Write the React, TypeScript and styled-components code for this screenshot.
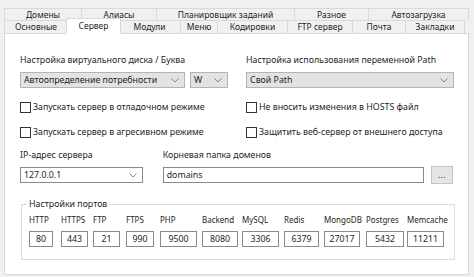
import React from "react";
import styled, { createGlobalStyle } from "styled-components";

const GlobalStyle = createGlobalStyle`
  body {
    margin: 0;
    background: #f0f0f0;
    font-family: "Noto Sans", "Open Sans", sans-serif;
    font-size: 8.8px;
    color: #1e1e1e;
  }
`;

const Window = styled.div`
  width: 474px;
  height: 277px;
  box-sizing: border-box;
  padding: 8px 5px 0 4px;
`;

const TabRow = styled.div`
  display: flex;
  height: 12px;
`;

const Tab = styled.div<{ $w: number; $active?: boolean }>`
  box-sizing: border-box;
  width: ${(p) => p.$w}px;
  height: ${(p) => (p.$active ? 16 : 13)}px;
  margin: ${(p) => (p.$active ? "-2px -2px 0" : "0")};
  padding-top: ${(p) => (p.$active ? 0 : 1)}px;
  border: 1px solid #d9d9d9;
  border-bottom: none;
  border-left-width: ${(p) => (p.$active ? 1 : 0)}px;
  &:first-child {
    border-left-width: 1px;
  }
  background: ${(p) => (p.$active ? "#fff" : "#f0f0f0")};
  position: ${(p) => (p.$active ? "relative" : "static")};
  z-index: ${(p) => (p.$active ? 2 : 0)};
  display: flex;
  align-items: center;
  justify-content: center;
  font-size: 8.5px;
  line-height: 1;
  white-space: nowrap;
`;

const Panel = styled.div`
  box-sizing: border-box;
  height: 242px;
  margin-top: 1px;
  background: #fff;
  border: 1px solid #d9d9d9;
  padding: 19px 15px 0 15px;
  position: relative;
  z-index: 1;
`;

const Columns = styled.div`
  display: grid;
  grid-template-columns: 208px 208px;
  column-gap: 18px;
`;

const Column = styled.div`
  display: flex;
  flex-direction: column;
`;

const Label = styled.div`
  height: 14px;
  line-height: 14px;
  white-space: nowrap;
`;

const SelectRow = styled.div`
  display: flex;
  gap: 5px;
  margin-top: 5px;
`;

const Select = styled.div<{ $w?: number; $white?: boolean }>`
  box-sizing: border-box;
  width: ${(p) => (p.$w ? `${p.$w}px` : "100%")};
  height: 16px;
  background: ${(p) => (p.$white ? "#fff" : "#e3e3e3")};
  border: 1px solid ${(p) => (p.$white ? "#8a8a8a" : "#b4b4b4")};
  display: flex;
  align-items: center;
  justify-content: space-between;
  padding: 0 5px 0 3px;
  white-space: nowrap;
`;

const Chevron = () => (
  <svg width="8" height="5" viewBox="0 0 8 5">
    <path d="M0.5 0.5 L4 4 L7.5 0.5" fill="none" stroke="#7a7a7a" strokeWidth="0.9" />
  </svg>
);

const CheckRow = styled.label`
  display: flex;
  align-items: center;
  gap: 2px;
  height: 12px;
  margin-top: 13px;
  white-space: nowrap;
`;

const Box = styled.span`
  box-sizing: border-box;
  width: 11px;
  height: 11px;
  border: 1px solid #333;
  background: #fff;
  flex-shrink: 0;
`;

const Fields = styled.div`
  display: flex;
  gap: 20px;
  margin-top: 10px;
`;

const Field = styled.div<{ $w: number }>`
  width: ${(p) => p.$w}px;
  display: flex;
  flex-direction: column;
`;

const FieldRow = styled.div`
  display: flex;
  gap: 7px;
  margin-top: 5px;
`;

const TextInput = styled.div`
  box-sizing: border-box;
  flex: 1;
  height: 16px;
  border: 1px solid #8a8a8a;
  background: #fff;
  display: flex;
  align-items: center;
  padding: 0 3px;
`;

const BrowseButton = styled.div`
  box-sizing: border-box;
  width: 22px;
  height: 18px;
  margin-top: -1px;
  border: 1px solid #c4c4c4;
  background: #e5e5e5;
  display: flex;
  align-items: center;
  justify-content: center;
  letter-spacing: 0.5px;
`;

const Group = styled.fieldset`
  margin: 14px 0 0 1px;
  width: 434px;
  box-sizing: border-box;
  border: 1px solid #dcdcdc;
  padding: 0 0 12px 7px;
`;

const Legend = styled.legend`
  padding: 0 2px;
  margin-left: -2px;
  line-height: 12px;
`;

const Ports = styled.div`
  display: flex;
`;

const PortCol = styled.div<{ $w: number }>`
  width: ${(p) => p.$w}px;
  display: flex;
  flex-direction: column;
`;

const PortLabel = styled.div`
  height: 14px;
  line-height: 14px;
  font-size: 8px;
  white-space: nowrap;
  margin-top: 3px;
`;

const PortInput = styled.div<{ $w: number }>`
  box-sizing: border-box;
  width: ${(p) => p.$w}px;
  height: 16px;
  margin-top: 4px;
  border: 1px solid #8a8a8a;
  background: #fff;
  display: flex;
  align-items: center;
  justify-content: center;
`;

const topTabs = [
  { label: "Домены", w: 78 },
  { label: "Алиасы", w: 75 },
  { label: "Планировщик заданий", w: 138 },
  { label: "Разное", w: 74 },
  { label: "Автозагрузка", w: 100 },
];

const bottomTabs = [
  { label: "Основные", w: 64 },
  { label: "Сервер", w: 55, active: true },
  { label: "Модули", w: 62 },
  { label: "Меню", w: 37 },
  { label: "Кодировки", w: 70 },
  { label: "FTP сервер", w: 65 },
  { label: "Почта", w: 53 },
  { label: "Закладки", w: 59 },
];

const ports = [
  { name: "HTTP", value: "80", col: 32, w: 24 },
  { name: "HTTPS", value: "443", col: 32, w: 27 },
  { name: "FTP", value: "21", col: 33, w: 27 },
  { name: "FTPS", value: "990", col: 34, w: 28 },
  { name: "PHP", value: "9500", col: 42, w: 37 },
  { name: "Backend", value: "8080", col: 40, w: 36 },
  { name: "MySQL", value: "3306", col: 42, w: 37 },
  { name: "Redis", value: "6379", col: 40, w: 35 },
  { name: "MongoDB", value: "27017", col: 42, w: 36 },
  { name: "Postgres", value: "5432", col: 41, w: 38 },
  { name: "Memcache", value: "11211", col: 40, w: 37 },
];

export default function App() {
  return (
    <Window>
      <GlobalStyle />
      <TabRow>
        {topTabs.map((t) => (
          <Tab key={t.label} $w={t.w}>
            {t.label}
          </Tab>
        ))}
      </TabRow>
      <TabRow>
        {bottomTabs.map((t) => (
          <Tab key={t.label} $w={t.w} $active={t.active}>
            {t.label}
          </Tab>
        ))}
      </TabRow>
      <Panel>
        <Columns>
          <Column>
            <Label>Настройка виртуального диска / Буква</Label>
            <SelectRow>
              <Select $w={165}>
                Автоопределение потребности
                <Chevron />
              </Select>
              <Select $w={38}>
                W
                <Chevron />
              </Select>
            </SelectRow>
            <CheckRow>
              <Box />
              Запускать сервер в отладочном режиме
            </CheckRow>
            <CheckRow>
              <Box />
              Запускать сервер в агресивном режиме
            </CheckRow>
          </Column>
          <Column>
            <Label>Настройка использования переменной Path</Label>
            <SelectRow>
              <Select>
                Свой Path
                <Chevron />
              </Select>
            </SelectRow>
            <CheckRow>
              <Box />
              Не вносить изменения в HOSTS файл
            </CheckRow>
            <CheckRow>
              <Box />
              Защитить веб-сервер от внешнего доступа
            </CheckRow>
          </Column>
        </Columns>
        <Fields>
          <Field $w={123}>
            <Label>IP-адрес сервера</Label>
            <FieldRow>
              <Select $white>
                127.0.0.1
                <Chevron />
              </Select>
            </FieldRow>
          </Field>
          <Field $w={291}>
            <Label>Корневая папка доменов</Label>
            <FieldRow>
              <TextInput>domains</TextInput>
              <BrowseButton>...</BrowseButton>
            </FieldRow>
          </Field>
        </Fields>
        <Group>
          <Legend>Настройки портов</Legend>
          <Ports>
            {ports.map((p) => (
              <PortCol key={p.name} $w={p.col}>
                <PortLabel>{p.name}</PortLabel>
                <PortInput $w={p.w}>{p.value}</PortInput>
              </PortCol>
            ))}
          </Ports>
        </Group>
      </Panel>
    </Window>
  );
}
